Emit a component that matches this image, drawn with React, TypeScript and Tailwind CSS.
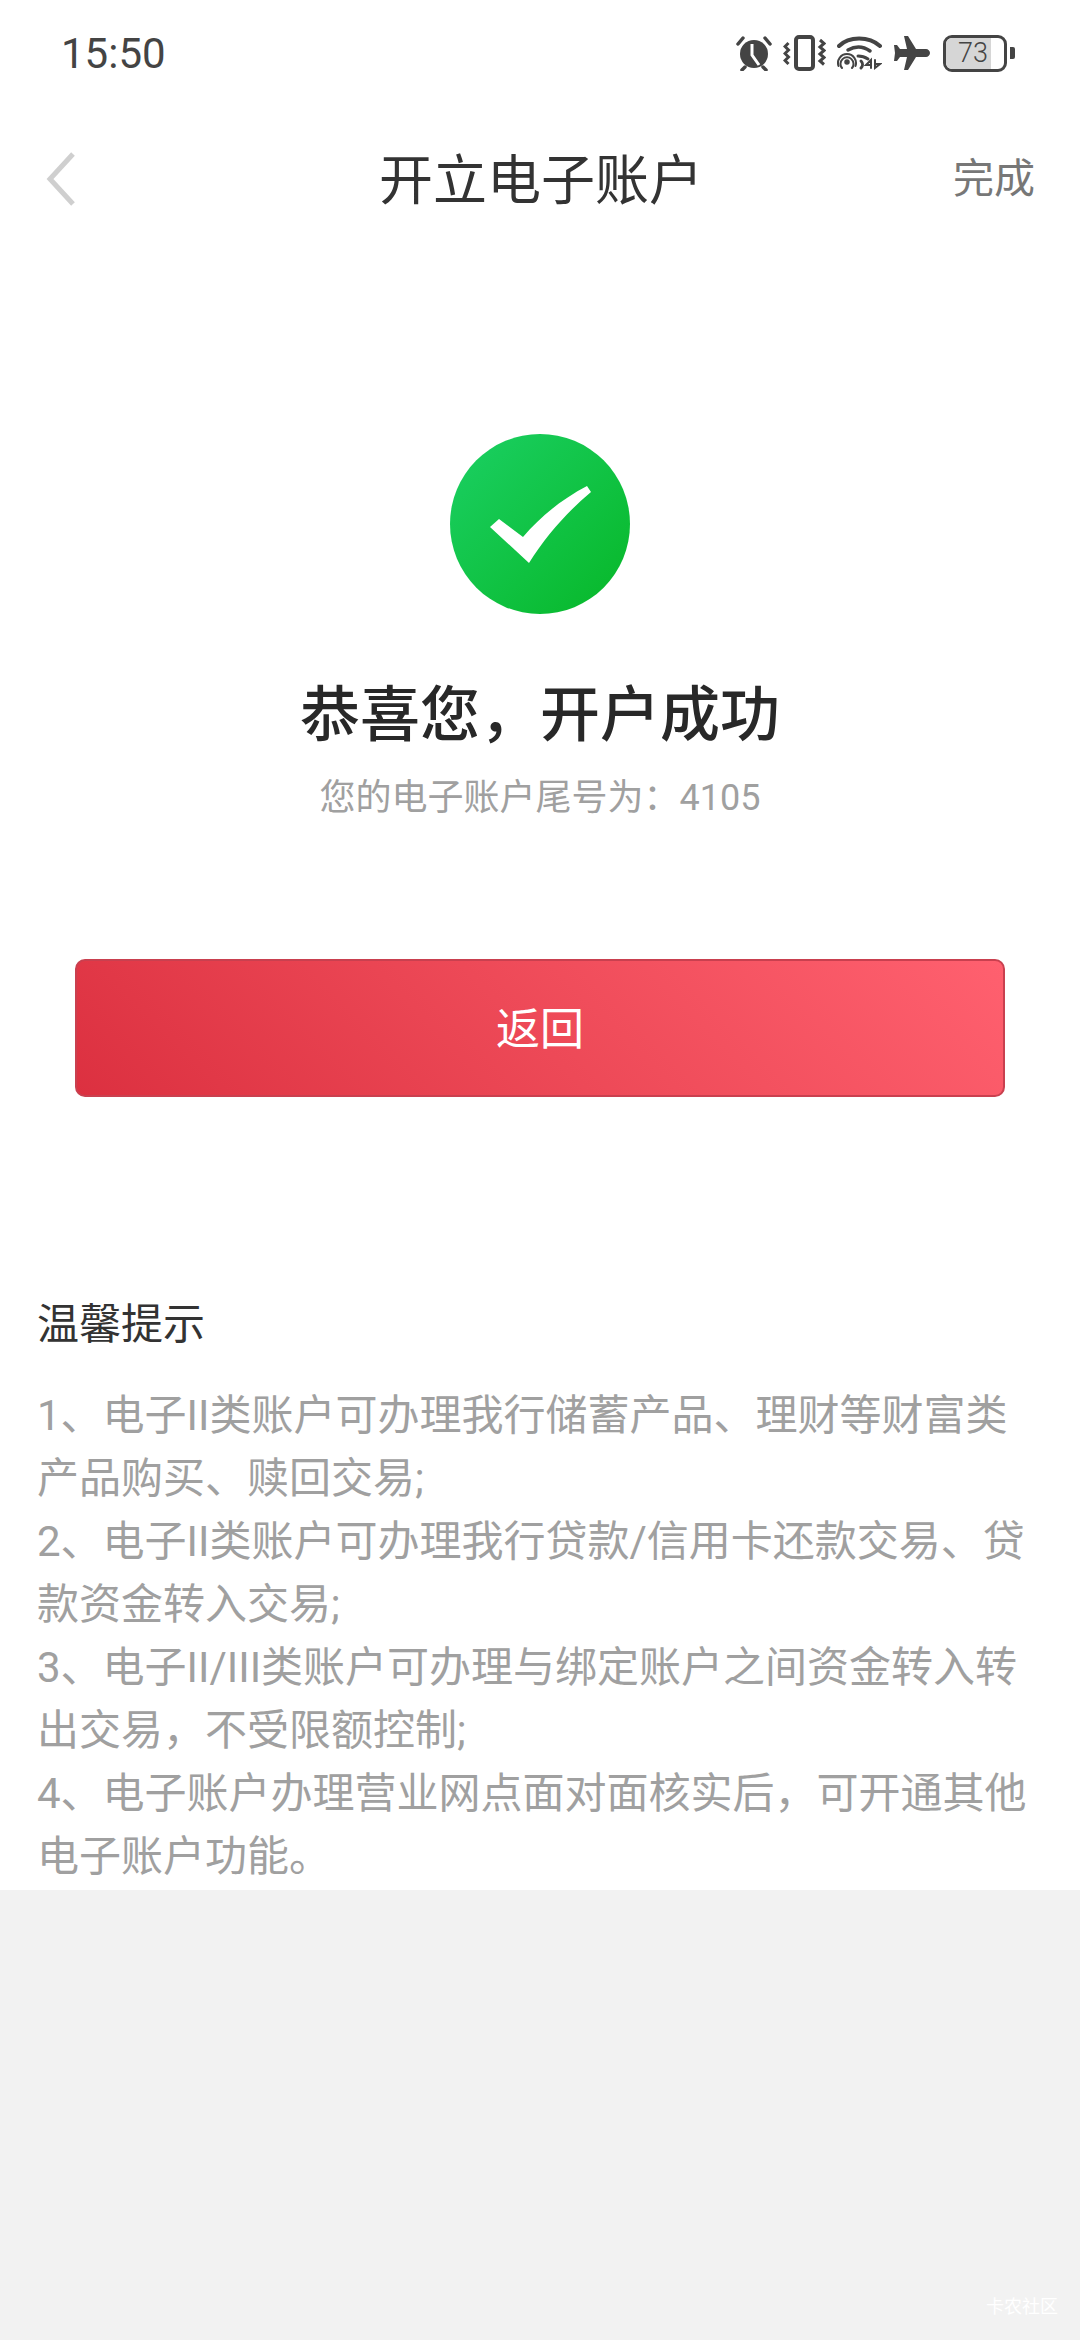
const CJK = "font-['Roboto','Noto_Sans_CJK_SC',sans-serif]";

const tips = [
  '1、电子II类账户可办理我行储蓄产品、理财等财富类产品购买、赎回交易;',
  '2、电子II类账户可办理我行贷款/信用卡还款交易、贷款资金转入交易;',
  '3、电子II/III类账户可办理与绑定账户之间资金转入转出交易，不受限额控制;',
  '4、电子账户办理营业网点面对面核实后，可开通其他电子账户功能。',
];

function StatusIcons() {
  return (
    <div className="flex items-center gap-[11px] text-[#444]">
      {/* alarm */}
      <svg width="36" height="36" viewBox="0 0 36 36" fill="none">
        <circle cx="18" cy="19" r="14" fill="#444" />
        <path d="M16 9v11l7 10" stroke="#fff" strokeWidth="3" />
        <path d="M2 9l5-6M34 9l-5-6M6 35l3-3M30 35l-3-3" stroke="#444" strokeWidth="3.500" strokeLinecap="round" />
      </svg>
      {/* vibrate */}
      <svg width="43" height="36" viewBox="0 0 43 36" fill="none" stroke="#444">
        <rect x="13" y="2" width="17" height="32" rx="3" strokeWidth="4" />
        <path d="M5.500 8L2 11.500 5.500 15 2 18.500 5.500 22 2 25.500 5.500 29M37 5l4 3.500L37 12l4 3.500L37 19l4 3.500L37 26l4 3.500" strokeWidth="3" />
      </svg>
      {/* wifi with rings */}
      <svg width="45" height="36" viewBox="0 0 45 36" fill="none" stroke="#444" strokeLinecap="round">
        <path d="M2 11C12 1 32 1 43 11" strokeWidth="4" />
        <path d="M11 15c7-4 15-4 22 1" strokeWidth="3.500" />
        <path d="M21 21c4 0 7 1 10 3" strokeWidth="3" />
        <circle cx="10" cy="27" r="2" fill="#444" strokeWidth="1.500" />
        <path d="M5 33a6.500 6.500 0 1 1 10 0M1.500 31a9 9 0 1 1 17 0" strokeWidth="2" />
        <path d="M24 26c2 2 2 5 0 7" strokeWidth="3" />
        <path d="M34 33V25l-5 5h5M38 25v8l5-4h-5" strokeWidth="2" />
      </svg>
      {/* plane */}
      <svg width="36" height="36" viewBox="0 0 36 36" fill="#444" className="ml-[1px]">
        <path d="M10 1h4l8 13h10c2 0 4 2 4 4s-2 4-4 4H22l-8 13h-4l3-13H6l-3 4H0l1-8-1-8h3l3 4h7z" />
      </svg>
      <div className="flex items-center gap-[3px] ml-[2px]">
        <div className="relative w-[64px] h-[37px] rounded-[9px] border-[3px] border-[#444] overflow-hidden">
          <div className="absolute inset-y-0 left-0 w-[78%] bg-[#d6d6d6]" />
          <span className="relative flex h-full items-center justify-center pr-1 text-[27px] leading-none text-[#444] font-['Roboto',sans-serif] font-light">73</span>
        </div>
        <div className="w-[5px] h-[12px] rounded-r-[2px] bg-[#444]" />
      </div>
    </div>
  );
}

export default function App() {
  return (
    <div className={`w-[1080px] h-[2340px] bg-[#f2f2f2] flex flex-col ${CJK}`}>
      <div className="bg-white h-[1890px]">
        {/* Status bar */}
        <div className="h-[106px] pl-[61px] pr-[65px] flex items-center justify-between">
          <span className="text-[42px] text-[#444]">15:50</span>
          <StatusIcons />
        </div>

        {/* Nav */}
        <div className="h-[146px] pl-[45px] pr-[45px] flex items-center justify-between relative">
          <svg width="32" height="56" viewBox="0 0 32 56" fill="none">
            <path d="M28 3L5 28l23 25" stroke="#cfcfcf" strokeWidth="5" />
          </svg>
          <h1 className="absolute inset-x-0 pt-1 pl-[2px] text-center text-[54px] text-[#333]">开立电子账户</h1>
          <span className="pt-[2px] text-[41px] text-[#777]">完成</span>
        </div>

        {/* Result */}
        <div className="mt-[182px] flex flex-col items-center">
          <svg width="180" height="180" viewBox="0 0 180 180">
            <defs>
              <linearGradient id="ok" x1="0" y1="0" x2="1" y2="1">
                <stop offset="0" stopColor="#1bd064" />
                <stop offset="1" stopColor="#07b727" />
              </linearGradient>
            </defs>
            <circle cx="90" cy="90" r="90" fill="url(#ok)" />
            <path d="M40 93l9-8 24 18c17-20 39-38 64-51l4 6c-24 20-45 44-62 71z" fill="#fff" />
          </svg>
          <h2 className="mt-[62px] text-[60px] leading-[80px] font-medium text-[#282828]">恭喜您，开户成功</h2>
          <p className="mt-[17px] text-[36px] leading-[50px] text-[#a0a0a0]">您的电子账户尾号为：4105</p>
        </div>

        {/* Back */}
        <div className="mt-[136px] mx-[75px] h-[138px] pt-1 rounded-[10px] border-[2px] border-[#c9404f] bg-linear-45 from-[#dc3040] to-[#ff606f] flex items-center justify-center text-[44px] text-white">
          返回
        </div>

        {/* Tips */}
        <div className="mt-[200px] px-[37px]">
          <h3 className="text-[42px] leading-[56px] text-[#333]">温馨提示</h3>
          <div className="mt-[31px] text-[42px] leading-[63px] text-[#a0a0a0]">
            {tips.map((t) => (
              <p key={t}>{t}</p>
            ))}
          </div>
        </div>
      </div>

      <div className="flex-1 relative">
        <span className="absolute right-[22px] bottom-[20px] text-[18px] text-white">卡农社区</span>
      </div>
    </div>
  );
}
